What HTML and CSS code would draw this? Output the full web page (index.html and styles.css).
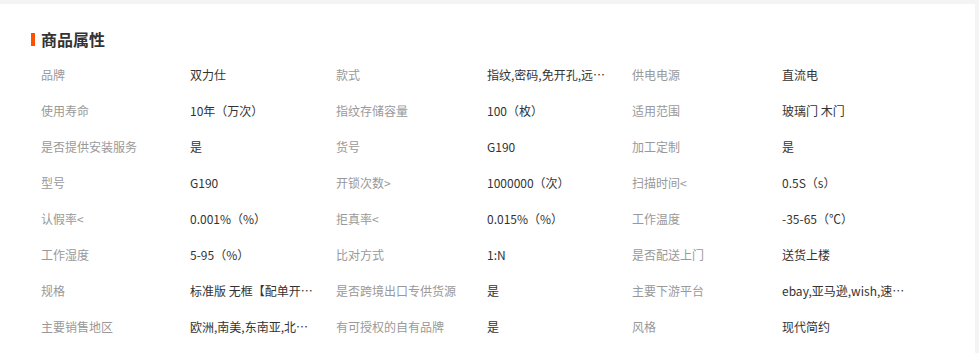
FILE: index.html
```html
<!DOCTYPE html>
<html lang="zh-CN">
<head>
<meta charset="utf-8">
<title>商品属性</title>
<link rel="stylesheet" href="styles.css">
</head>
<body>
<div class="card">
  <h2 class="title">商品属性</h2>
  <div class="attrs">
    <div class="k">品牌</div><div class="v">双力仕</div>
    <div class="k">款式</div><div class="v">指纹,密码,免开孔,远…</div>
    <div class="k">供电电源</div><div class="v">直流电</div>

    <div class="k">使用寿命</div><div class="v">10年（万次）</div>
    <div class="k">指纹存储容量</div><div class="v">100（枚）</div>
    <div class="k">适用范围</div><div class="v">玻璃门 木门</div>

    <div class="k">是否提供安装服务</div><div class="v">是</div>
    <div class="k">货号</div><div class="v">G190</div>
    <div class="k">加工定制</div><div class="v">是</div>

    <div class="k">型号</div><div class="v">G190</div>
    <div class="k">开锁次数&gt;</div><div class="v">1000000（次）</div>
    <div class="k">扫描时间&lt;</div><div class="v">0.5S（s）</div>

    <div class="k">认假率&lt;</div><div class="v">0.001%（%）</div>
    <div class="k">拒真率&lt;</div><div class="v">0.015%（%）</div>
    <div class="k">工作温度</div><div class="v">-35-65（℃）</div>

    <div class="k">工作湿度</div><div class="v">5-95（%）</div>
    <div class="k">比对方式</div><div class="v">1:N</div>
    <div class="k">是否配送上门</div><div class="v">送货上楼</div>

    <div class="k">规格</div><div class="v">标准版 无框【配单开…</div>
    <div class="k">是否跨境出口专供货源</div><div class="v">是</div>
    <div class="k">主要下游平台</div><div class="v">ebay,亚马逊,wish,速…</div>

    <div class="k">主要销售地区</div><div class="v">欧洲,南美,东南亚,北…</div>
    <div class="k">有可授权的自有品牌</div><div class="v">是</div>
    <div class="k">风格</div><div class="v">现代简约</div>
  </div>
</div>
</body>
</html>
```

FILE: styles.css
```css
html, body {
  margin: 0;
  padding: 0;
  background: #f4f4f4;
}
body {
  font-family: "Noto Sans CJK SC", "Liberation Sans", sans-serif;
  font-size: 12px;
  color: #333;
}
.card {
  margin-top: 4px;
  width: 975px;
  height: 349px;
  background: #fff;
  padding: 24px 0 0 31px;
  box-sizing: border-box;
  overflow: hidden;
}
.title {
  margin: 0;
  font-size: 16px;
  line-height: 22px;
  font-weight: bold;
  color: #333;
  display: flex;
  align-items: center;
  gap: 6px;
}
.title::before {
  content: "";
  width: 4px;
  height: 13px;
  background: #ff5000;
}
.attrs {
  margin-top: 6px;
  padding-left: 10px;
  display: grid;
  grid-template-columns: 149px 146px 151px 145px 150px 146px;
  grid-auto-rows: 36px;
  align-items: center;
}
.k {
  color: #999;
  white-space: nowrap;
}
.v {
  color: #333;
  white-space: nowrap;
}
```
